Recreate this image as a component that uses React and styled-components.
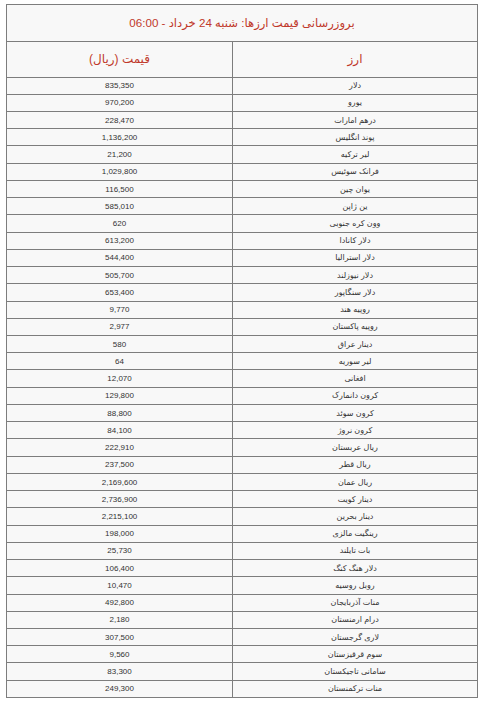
import React from 'react';
import styled, { createGlobalStyle } from 'styled-components';

const rates = [
    ['دلار', '835,350'],
    ['یورو', '970,200'],
    ['درهم امارات', '228,470'],
    ['پوند انگلیس', '1,136,200'],
    ['لیر ترکیه', '21,200'],
    ['فرانک سوئیس', '1,029,800'],
    ['یوان چین', '116,500'],
    ['ین ژاپن', '585,010'],
    ['وون کره جنوبی', '620'],
    ['دلار کانادا', '613,200'],
    ['دلار استرالیا', '544,400'],
    ['دلار نیوزلند', '505,700'],
    ['دلار سنگاپور', '653,400'],
    ['روپیه هند', '9,770'],
    ['روپیه پاکستان', '2,977'],
    ['دینار عراق', '580'],
    ['لیر سوریه', '64'],
    ['افغانی', '12,070'],
    ['کرون دانمارک', '129,800'],
    ['کرون سوئد', '88,800'],
    ['کرون نروژ', '84,100'],
    ['ریال عربستان', '222,910'],
    ['ریال قطر', '237,500'],
    ['ریال عمان', '2,169,600'],
    ['دینار کویت', '2,736,900'],
    ['دینار بحرین', '2,215,100'],
    ['رینگیت مالزی', '198,000'],
    ['بات تایلند', '25,730'],
    ['دلار هنگ کنگ', '106,400'],
    ['روبل روسیه', '10,470'],
    ['منات آذربایجان', '492,800'],
    ['درام ارمنستان', '2,180'],
    ['لاری گرجستان', '307,500'],
    ['سوم قرقیزستان', '9,560'],
    ['سامانی تاجیکستان', '83,300'],
    ['منات ترکمنستان', '249,300']
];

const GlobalStyle = createGlobalStyle`
    body {
        margin: 0;
        background: #ffffff;
        font-family: "Liberation Sans", "DejaVu Sans", sans-serif;
    }
`;

const StPage = styled.div`
    padding: 4px 0 0 6px;
`;

const StTable = styled.table`
    direction: rtl;
    width: 471px;
    border-collapse: collapse;
    table-layout: fixed;
    background-color: #f8f8f8;
`;

const StCell = styled.td`
    border: 1px solid #7d7d7d;
    padding: 0;
    text-align: center;
    vertical-align: middle;
    color: ${(props) => (props.$red ? '#c0392b' : '#333333')};
    font-size: ${(props) => props.$size || 8}px;
    height: ${(props) => props.$h || 17.24}px;
    box-sizing: border-box;
`;

const App = () => {
    return (
        <StPage>
            <GlobalStyle />
            <StTable>
                <colgroup>
                    <col style={{ width: 245 }} />
                    <col style={{ width: 226 }} />
                </colgroup>
                <tbody>
                    <tr>
                        <StCell colSpan={2} $red $size={11.6} $h={36.5}>
                            بروزرسانی قیمت ارزها: شنبه 24 خرداد - 06:00
                        </StCell>
                    </tr>
                    <tr>
                        <StCell $red $size={12} $h={36}>
                            ارز
                        </StCell>
                        <StCell $red $size={12} $h={36}>
                            قیمت (ریال)
                        </StCell>
                    </tr>
                    {rates.map(([name, price]) => (
                        <tr key={name}>
                            <StCell>{name}</StCell>
                            <StCell>{price}</StCell>
                        </tr>
                    ))}
                </tbody>
            </StTable>
        </StPage>
    );
};

export default App;
